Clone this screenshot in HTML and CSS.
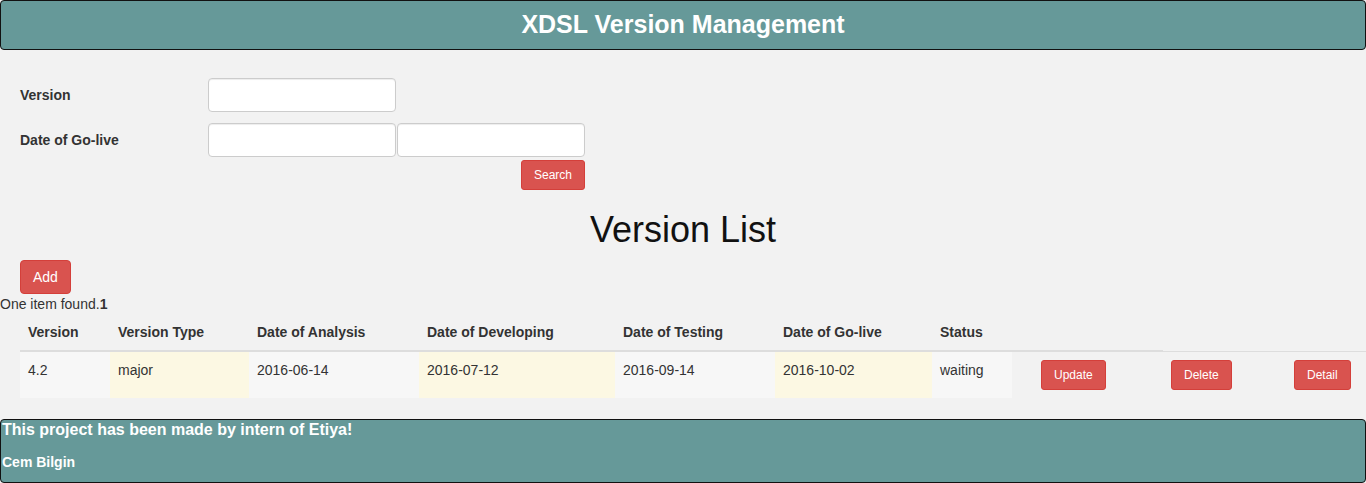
FILE: index.html
```html
<!DOCTYPE html>
<html>
<head>
<meta charset="utf-8">
<title>XDSL Version Management</title>
<link rel="stylesheet" href="styles.css">
</head>
<body>
<header class="topbar">
  <h2 class="topbar-title">XDSL Version Management</h2>
</header>

<form class="search-form">
  <div class="form-row">
    <label class="form-label">Version</label>
    <input class="form-input" type="text">
  </div>
  <div class="form-row form-row-2">
    <label class="form-label">Date of Go-live</label>
    <input class="form-input" type="text">
    <input class="form-input form-input-gap" type="text">
  </div>
  <div class="form-actions">
    <button type="button" class="btn btn-sm">Search</button>
  </div>
</form>

<h1 class="list-title">Version List</h1>

<div class="add-wrap">
  <button type="button" class="btn btn-md">Add</button>
</div>
<div class="count">One item found.<b>1</b></div>

<table class="vtable">
  <colgroup>
    <col class="c1"><col class="c2"><col class="c3"><col class="c4"><col class="c5">
    <col class="c6"><col class="c7"><col class="c8"><col class="c9"><col class="c10">
  </colgroup>
  <thead>
    <tr>
      <th>Version</th>
      <th>Version Type</th>
      <th>Date of Analysis</th>
      <th>Date of Developing</th>
      <th>Date of Testing</th>
      <th>Date of Go-live</th>
      <th>Status</th>
      <th></th>
      <th class="th-thin"></th>
      <th class="th-thin"></th>
    </tr>
  </thead>
  <tbody>
    <tr>
      <td class="striped">4.2</td>
      <td class="warn">major</td>
      <td class="striped">2016-06-14</td>
      <td class="warn">2016-07-12</td>
      <td class="striped">2016-09-14</td>
      <td class="warn">2016-10-02</td>
      <td class="striped">waiting</td>
      <td class="act act-first"><button type="button" class="btn btn-sm">Update</button></td>
      <td class="act"><button type="button" class="btn btn-sm">Delete</button></td>
      <td class="act"><button type="button" class="btn btn-sm">Detail</button></td>
    </tr>
  </tbody>
</table>

<footer class="footbar">
  <div class="foot-main">This project has been made by intern of Etiya!</div>
  <div class="foot-name">Cem Bilgin</div>
</footer>
</body>
</html>
```

FILE: styles.css
```css
* { box-sizing: border-box; }

html, body {
  margin: 0;
  padding: 0;
}

body {
  background: #f2f2f2;
  font-family: "Liberation Sans", Arial, sans-serif;
  font-size: 14px;
  line-height: 20px;
  color: #333;
  width: 1366px;
  overflow: hidden;
}

.topbar {
  height: 50px;
  background: #669999;
  border: 1px solid #111;
  border-radius: 4px;
  display: flex;
  align-items: center;
  justify-content: center;
}

.topbar-title {
  margin: 0;
  color: #fff;
  font-size: 25px;
  font-weight: bold;
  line-height: 30px;
  padding-bottom: 2px;
}

.search-form {
  width: 585px;
  padding-left: 20px;
  margin: 28px 0 0 0;
}

.form-row {
  display: flex;
  align-items: center;
  height: 34px;
}

.form-row-2 {
  margin-top: 11px;
}

.form-label {
  width: 188px;
  font-weight: bold;
  font-size: 14px;
}

.form-input {
  width: 188px;
  height: 34px;
  background: #fff;
  border: 1px solid #ccc;
  border-radius: 4px;
  box-shadow: inset 0 1px 1px rgba(0,0,0,.075);
  padding: 6px 12px;
  font: inherit;
}

.form-input-gap {
  margin-left: 1px;
}

.form-actions {
  display: flex;
  justify-content: flex-end;
  margin-top: 3px;
}

.btn {
  font-family: "Liberation Sans", Arial, sans-serif;
  background: #d9534f;
  border: 1px solid #d43f3a;
  color: #fff;
  cursor: pointer;
  white-space: nowrap;
}

.btn-sm {
  font-size: 12px;
  line-height: 18px;
  padding: 5px 12px;
  border-radius: 3px;
  height: 30px;
}

.btn-md {
  font-size: 14px;
  line-height: 20px;
  padding: 6px 12px;
  border-radius: 4px;
  height: 34px;
}

.list-title {
  margin: 20px 0 10px;
  text-align: center;
  font-size: 36px;
  font-weight: normal;
  line-height: 40px;
  color: #111;
}

.add-wrap {
  padding-left: 20px;
  height: 34px;
  display: flex;
}

.count {
  height: 20px;
}

.vtable {
  margin-left: 20px;
  width: 1346px;
  border-collapse: separate;
  border-spacing: 0;
  table-layout: fixed;
}

.c1 { width: 90px; }
.c2 { width: 139px; }
.c3 { width: 170px; }
.c4 { width: 196px; }
.c5 { width: 160px; }
.c6 { width: 157px; }
.c7 { width: 80px; }
.c8 { width: 151px; }
.c9 { width: 123px; }
.c10 { width: 80px; }

.vtable th {
  text-align: left;
  font-weight: bold;
  padding: 8px;
  line-height: 20px;
  vertical-align: bottom;
  border-bottom: 2px solid #ddd;
  white-space: nowrap;
}

.vtable th.th-thin {
  border-bottom: 1px solid #ddd;
}

.vtable td {
  padding: 8px;
  line-height: 20px;
  vertical-align: top;
  white-space: nowrap;
}

.vtable td.striped { background: #f7f7f7; }
.vtable td.warn { background: #fcf8e3; }
.vtable td.act { background: transparent; }
.vtable td.act-first { padding-left: 29px; }

.footbar {
  margin-top: 21px;
  height: 64px;
  background: #669999;
  border: 1px solid #111;
  border-radius: 4px;
  padding: 0 1px;
  color: #fff;
  font-weight: bold;
}

.foot-main {
  font-size: 16px;
  line-height: 20px;
}

.foot-name {
  font-size: 14px;
  line-height: 20px;
  margin-top: 12px;
}
```
